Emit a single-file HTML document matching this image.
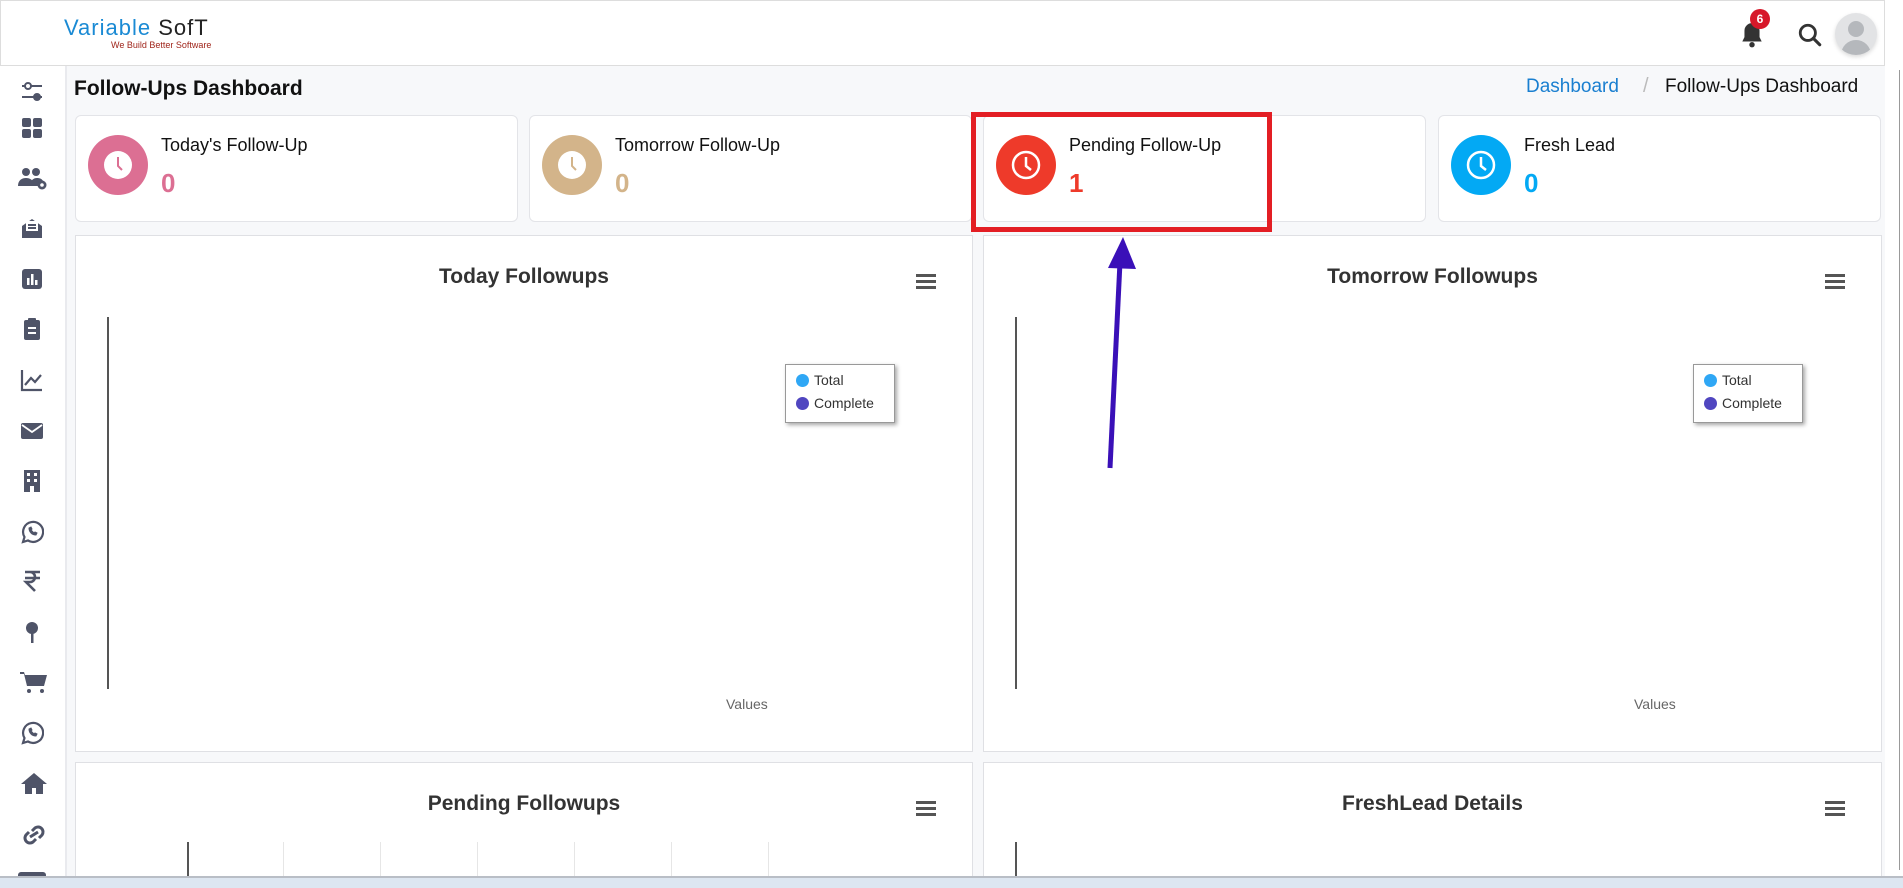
<!DOCTYPE html>
<html style="width:1903px;height:888px;overflow:hidden"><head><meta charset="utf-8"><style>
*{margin:0;padding:0;box-sizing:border-box}
body{width:1903px;height:888px;overflow:hidden;background:#f7f8fa;font-family:"Liberation Sans",sans-serif;position:relative;color:#111}
.a{position:absolute}
.hdr{left:0;top:0;width:1885px;height:66px;background:#fff;border:1px solid #ddd}
.side{left:0;top:66px;width:67px;height:810px;background:#fff;border-right:2px solid #e9eaee;overflow:hidden}
.ic{position:absolute;left:20px;width:24px;height:24px}
.card{background:#fff;border:1px solid #e3e4e8;border-radius:6px;height:107px;top:115px;width:443px}
.circ{position:absolute;left:12px;top:19px;width:60px;height:60px;border-radius:50%}
.ct{position:absolute;left:85px;top:19px;font-size:18px;color:#111}
.cn{position:absolute;left:85px;top:52px;font-size:26px;font-weight:bold}
.panel{background:#fff;border:1px solid #dfe0e4;overflow:hidden}
.pt{position:absolute;width:100%;text-align:center;font-size:21px;font-weight:bold;color:#333}
.hb{position:absolute;width:20px;height:3px;background:#555;box-shadow:0 6px 0 #555,0 12px 0 #555}
.leg{position:absolute;width:110px;height:59px;background:#fff;border:1px solid #999;box-shadow:2px 2px 4px rgba(0,0,0,.35);font-size:14px;color:#333}
.leg div{position:absolute;left:28px}
.dot{position:absolute;left:10px;width:13px;height:13px;border-radius:50%}
</style></head><body>
<div class="a hdr">
 <div class="a" style="left:63px;top:14px;font-size:22px;letter-spacing:1px"><span style="color:#1a8ad4">Variable</span> <span style="color:#222">SofT</span></div>
 <div class="a" style="left:110px;top:39px;font-size:9px;color:#a0261c">We Build Better Software</div>
 <svg class="a" style="left:1738px;top:20px" width="26" height="28" viewBox="0 0 24 26"><path d="M12 2a7 7 0 0 0-7 7v6l-2 4h18l-2-4V9a7 7 0 0 0-7-7z" fill="#333"/><circle cx="12" cy="22" r="2.5" fill="#333"/></svg>
 <div class="a" style="left:1749px;top:8px;width:20px;height:20px;border-radius:50%;background:#d7182a;color:#fff;font-size:12px;font-weight:bold;text-align:center;line-height:20px">6</div>
 <svg class="a" style="left:1796px;top:21px" width="26" height="26" viewBox="0 0 24 24"><circle cx="10" cy="10" r="7" fill="none" stroke="#333" stroke-width="2.6"/><path d="M15 15l6 6" stroke="#333" stroke-width="2.8" stroke-linecap="round"/></svg>
 <div class="a" style="left:1834px;top:12px;width:42px;height:42px;border-radius:50%;background:#e2e3e5;overflow:hidden;box-shadow:0 2px 4px rgba(0,0,0,.15)">
  <div class="a" style="left:13px;top:8px;width:16px;height:16px;border-radius:50%;background:#b5b8bc"></div>
  <div class="a" style="left:6px;top:27px;width:30px;height:20px;border-radius:15px 15px 0 0;background:#b5b8bc"></div>
 </div>
</div>
<div class="a" style="left:1885px;top:0;width:18px;height:877px;background:#fff"><div class="a" style="left:14px;top:70px;width:1px;height:800px;background:#999"></div></div>
<div class="a side">
 <svg class="ic" style="top:14px" viewBox="0 0 24 24" fill="#4f5468" stroke="#4f5468"><circle cx="8" cy="6" r="3" fill="none" stroke-width="2"/><path d="M2 6h3M11 6h11M2 17h12M20 17h2" stroke-width="2"/><circle cx="17" cy="17" r="3.5"/></svg>
 <svg class="ic" style="top:50px" viewBox="0 0 24 24" fill="#4f5468"><rect x="2" y="2" width="9" height="9" rx="2"/><rect x="13" y="2" width="9" height="9" rx="2"/><rect x="2" y="13" width="9" height="9" rx="2"/><rect x="13" y="13" width="9" height="9" rx="2"/></svg>
 <svg class="ic" style="top:100px;left:18px;width:30px" viewBox="0 0 30 24" fill="#4f5468"><circle cx="8" cy="6" r="4"/><circle cx="18" cy="6" r="4"/><path d="M0 20c0-6 4-8 8-8s8 2 8 8zM12 20c0-5 3-8 7-8 3 0 5 1 6 3l-3 5z"/><circle cx="24" cy="19" r="4.5"/><circle cx="24" cy="19" r="1.8" fill="#fff"/></svg>
 <svg class="ic" style="top:150px" viewBox="0 0 24 24" fill="#4f5468"><path d="M2 10l10-7 10 7v12H2z"/><rect x="6" y="5" width="12" height="10" fill="#fff"/><rect x="8" y="8" width="8" height="2"/><rect x="8" y="11" width="8" height="2"/></svg>
 <svg class="ic" style="top:201px" viewBox="0 0 24 24" fill="#4f5468"><rect x="2" y="2" width="20" height="20" rx="3"/><rect x="7" y="11" width="2.5" height="7" fill="#fff"/><rect x="11" y="7" width="2.5" height="11" fill="#fff"/><rect x="15" y="13" width="2.5" height="5" fill="#fff"/></svg>
 <svg class="ic" style="top:251px" viewBox="0 0 24 24" fill="#4f5468"><rect x="4" y="3" width="16" height="20" rx="2"/><rect x="8" y="1" width="8" height="5" rx="1"/><rect x="8" y="10" width="8" height="2" fill="#fff"/><rect x="8" y="15" width="8" height="2" fill="#fff"/></svg>
 <svg class="ic" style="top:302px" viewBox="0 0 24 24" fill="none" stroke="#4f5468" stroke-width="2.2"><path d="M2 2v20h20M5 17l6-7 4 4 6-7"/></svg>
 <svg class="ic" style="top:353px" viewBox="0 0 24 24" fill="#4f5468"><rect x="1" y="4" width="22" height="16" rx="2"/><path d="M2 6l10 7 10-7" stroke="#fff" stroke-width="1.8" fill="none"/></svg>
 <svg class="ic" style="top:403px" viewBox="0 0 24 24" fill="#4f5468"><rect x="4" y="1" width="16" height="22"/><g fill="#fff"><rect x="7" y="4" width="3" height="3"/><rect x="14" y="4" width="3" height="3"/><rect x="7" y="10" width="3" height="3"/><rect x="14" y="10" width="3" height="3"/><rect x="10" y="17" width="4" height="6"/></g></svg>
 <svg class="ic" style="top:454px" viewBox="0 0 24 24" fill="none" stroke="#4f5468" stroke-width="2.2"><path d="M3 22l1.5-5A10 10 0 1 1 8 20.5z"/><path d="M9 8c0 4 3 7 7 7l1-2-2-1-1 1c-1-1-2-2-3-3l1-1-1-2z" fill="#4f5468" stroke-width="1"/></svg>
 <svg class="ic" style="top:503px" viewBox="0 0 24 24" fill="none" stroke="#4f5468" stroke-width="2.6"><path d="M5 3h15M5 9h15M7 3h3a5 5 0 0 1 0 10H6l9 9"/></svg>
 <svg class="ic" style="top:554px" viewBox="0 0 24 24" fill="#4f5468"><circle cx="12" cy="8" r="6"/><rect x="11" y="13" width="2.5" height="10"/></svg>
 <svg class="ic" style="top:604px;width:28px" viewBox="0 0 28 24" fill="#4f5468"><path d="M0 2h4l1 3h22l-3 11H7L4 4H0z"/><circle cx="9" cy="21" r="2"/><circle cx="22" cy="21" r="2"/></svg>
 <svg class="ic" style="top:655px" viewBox="0 0 24 24" fill="none" stroke="#4f5468" stroke-width="2.2"><path d="M3 22l1.5-5A10 10 0 1 1 8 20.5z"/><path d="M9 8c0 4 3 7 7 7l1-2-2-1-1 1c-1-1-2-2-3-3l1-1-1-2z" fill="#4f5468" stroke-width="1"/></svg>
 <svg class="ic" style="top:706px;width:28px" viewBox="0 0 28 24" fill="#4f5468"><path d="M14 1L1 12h4v10h7v-6h4v6h7V12h4z"/></svg>
 <svg class="ic" style="top:757px;width:28px" viewBox="0 0 28 24" fill="none" stroke="#4f5468" stroke-width="3"><path d="M12 8l3-3a5 5 0 0 1 7 7l-3 3M16 16l-3 3a5 5 0 0 1-7-7l3-3M10 14l8-5"/></svg>
 <div class="a" style="left:18px;top:806px;width:28px;height:10px;border-radius:3px;background:#4f5468"></div>
</div>
<div class="a" style="left:74px;top:77px;font-size:21px;font-weight:bold">Follow-Ups Dashboard</div>
<div class="a" style="left:1526px;top:76px;font-size:19px;color:#1a7fd0">Dashboard</div>
<div class="a" style="left:1643px;top:75px;font-size:20px;color:#bbb">/</div>
<div class="a" style="left:1665px;top:76px;font-size:19px;color:#111">Follow-Ups Dashboard</div>

<div class="a card" style="left:75px"><div class="circ" style="background:#dc6f93"><svg width="60" height="60" viewBox="0 0 60 60"><circle cx="30" cy="30" r="14" fill="#fff"/><path d="M30 22v9l4 4" stroke="#dc6f93" stroke-width="2" fill="none"/></svg></div><div class="ct">Today's Follow-Up</div><div class="cn" style="color:#dc6f93">0</div></div>
<div class="a card" style="left:529px"><div class="circ" style="background:#d3b48a"><svg width="60" height="60" viewBox="0 0 60 60"><circle cx="30" cy="30" r="14" fill="#fff"/><path d="M30 22v9l4 4" stroke="#d3b48a" stroke-width="2" fill="none"/></svg></div><div class="ct">Tomorrow Follow-Up</div><div class="cn" style="color:#d3b48a">0</div></div>
<div class="a card" style="left:983px"><div class="circ" style="background:#ee3a2a"><svg width="60" height="60" viewBox="0 0 60 60"><circle cx="30" cy="30" r="13" fill="none" stroke="#fff" stroke-width="2.5"/><path d="M30 22v9l5 4" stroke="#fff" stroke-width="2.5" fill="none"/></svg></div><div class="ct">Pending Follow-Up</div><div class="cn" style="color:#ee3a2a">1</div></div>
<div class="a card" style="left:1438px"><div class="circ" style="background:#03a9f4"><svg width="60" height="60" viewBox="0 0 60 60"><circle cx="30" cy="30" r="13" fill="none" stroke="#fff" stroke-width="2.5"/><path d="M30 22v9l5 4" stroke="#fff" stroke-width="2.5" fill="none"/></svg></div><div class="ct">Fresh Lead</div><div class="cn" style="color:#03a9f4">0</div></div>

<div class="a panel" style="left:75px;top:235px;width:898px;height:517px">
 <div class="pt" style="top:29px">Today Followups</div><div class="hb" style="left:840px;top:38px"></div>
 <div class="a" style="left:31px;top:81px;width:2px;height:372px;background:#555"></div>
 <div class="leg" style="left:709px;top:128px"><span class="dot" style="top:9px;background:#2fa7f5"></span><div style="top:7px">Total</div><span class="dot" style="top:32px;background:#5046c0"></span><div style="top:30px">Complete</div></div>
 <div class="a" style="left:650px;top:460px;font-size:14px;color:#666">Values</div>
</div>
<div class="a panel" style="left:983px;top:235px;width:899px;height:517px">
 <div class="pt" style="top:29px">Tomorrow Followups</div><div class="hb" style="left:841px;top:38px"></div>
 <div class="a" style="left:31px;top:81px;width:2px;height:372px;background:#555"></div>
 <div class="leg" style="left:709px;top:128px"><span class="dot" style="top:9px;background:#2fa7f5"></span><div style="top:7px">Total</div><span class="dot" style="top:32px;background:#5046c0"></span><div style="top:30px">Complete</div></div>
 <div class="a" style="left:650px;top:460px;font-size:14px;color:#666">Values</div>
</div>
<div class="a panel" style="left:75px;top:762px;width:898px;height:116px;border-bottom:none">
 <div class="pt" style="top:29px">Pending Followups</div><div class="hb" style="left:840px;top:38px"></div>
 <div class="a" style="left:111px;top:79px;width:2px;height:40px;background:#555"></div>
 <div class="a" style="left:207px;top:79px;width:1px;height:40px;background:#e6e6e6"></div>
 <div class="a" style="left:304px;top:79px;width:1px;height:40px;background:#e6e6e6"></div>
 <div class="a" style="left:401px;top:79px;width:1px;height:40px;background:#e6e6e6"></div>
 <div class="a" style="left:498px;top:79px;width:1px;height:40px;background:#e6e6e6"></div>
 <div class="a" style="left:595px;top:79px;width:1px;height:40px;background:#e6e6e6"></div>
 <div class="a" style="left:692px;top:79px;width:1px;height:40px;background:#e6e6e6"></div>
</div>
<div class="a panel" style="left:983px;top:762px;width:899px;height:116px;border-bottom:none">
 <div class="pt" style="top:29px">FreshLead Details</div><div class="hb" style="left:841px;top:38px"></div>
 <div class="a" style="left:31px;top:79px;width:2px;height:40px;background:#555"></div>
</div>

<div class="a" style="left:971px;top:112px;width:301px;height:120px;border:5px solid #e31e24"></div>
<svg class="a" style="left:0;top:0" width="1903" height="888"><path d="M1110 468L1120 262" stroke="#3a10b8" stroke-width="5"/><path d="M1108 268L1123 237L1136 269z" fill="#3a10b8"/></svg>

<div class="a" style="left:0;top:876px;width:1903px;height:12px;background:#dde6f1;border-top:2px solid #b9bec6"></div>
</body></html>
